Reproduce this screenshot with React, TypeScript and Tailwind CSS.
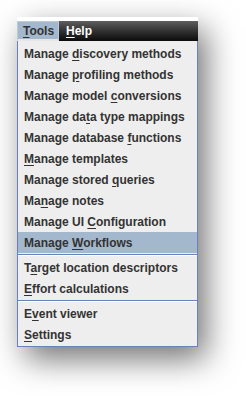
import React from 'react';

type Item = { label: string; key: number } | 'sep';

const items: Item[] = [
  { label: 'Manage discovery methods', key: 7 },
  { label: 'Manage profiling methods', key: 7 },
  { label: 'Manage model conversions', key: 13 },
  { label: 'Manage data type mappings', key: 9 },
  { label: 'Manage database functions', key: 16 },
  { label: 'Manage templates', key: 0 },
  { label: 'Manage stored queries', key: 14 },
  { label: 'Manage notes', key: 2 },
  { label: 'Manage UI Configuration', key: 10 },
  { label: 'Manage Workflows', key: 7 },
  'sep',
  { label: 'Target location descriptors', key: 1 },
  { label: 'Effort calculations', key: 0 },
  'sep',
  { label: 'Event viewer', key: 1 },
  { label: 'Settings', key: 0 },
];

const Mnemonic: React.FC<{ label: string; at: number }> = ({ label, at }) => (
  <span className="whitespace-pre">
    {label.slice(0, at)}
    <span className="underline underline-offset-2">{label[at]}</span>
    {label.slice(at + 1)}
  </span>
);

export default function App() {
  return (
    <div
      className="w-[246px] h-[396px] bg-white pt-[17px] pl-[17px] text-[12px] font-bold"
      style={{ fontFamily: '"Liberation Sans", Arial, sans-serif' }}
    >
      <div className="w-[181px] shadow-[8px_12px_30px_rgba(0,0,0,0.55)]">
        <div className="h-[4px] bg-white" />
        {/* menu bar */}
        <div className="flex h-[20px] bg-gradient-to-b from-[#5e5e5e] to-[#0c0c0c]">
          <div className="w-[42px] h-full flex items-center pl-[5px] bg-[#a3b8cc] border border-[#bccbdb] border-b-2 border-b-[#e6e6e6] text-[#333333]">
            <Mnemonic label="Tools" at={0} />
          </div>
          <div className="flex items-center pl-[7px] text-white">
            <Mnemonic label="Help" at={0} />
          </div>
        </div>
        {/* popup */}
        <div className="bg-[#eeeeee] border-x border-b border-[#6c80bd] pt-[2px] pb-[1px] text-[#333333]">
          {items.map((it, i) =>
            it === 'sep' ? (
              <div key={i} className="h-[4px] py-[1px]">
                <div className="h-px bg-[#6c80bd]" />
                <div className="h-px bg-white" />
              </div>
            ) : (
              <div
                key={i}
                className={`h-[21px] flex items-center pl-[6px] ${
                  it.label === 'Manage Workflows' ? 'bg-[#a3b8cc]' : ''
                }`}
              >
                <Mnemonic label={it.label} at={it.key} />
              </div>
            )
          )}
        </div>
      </div>
    </div>
  );
}
